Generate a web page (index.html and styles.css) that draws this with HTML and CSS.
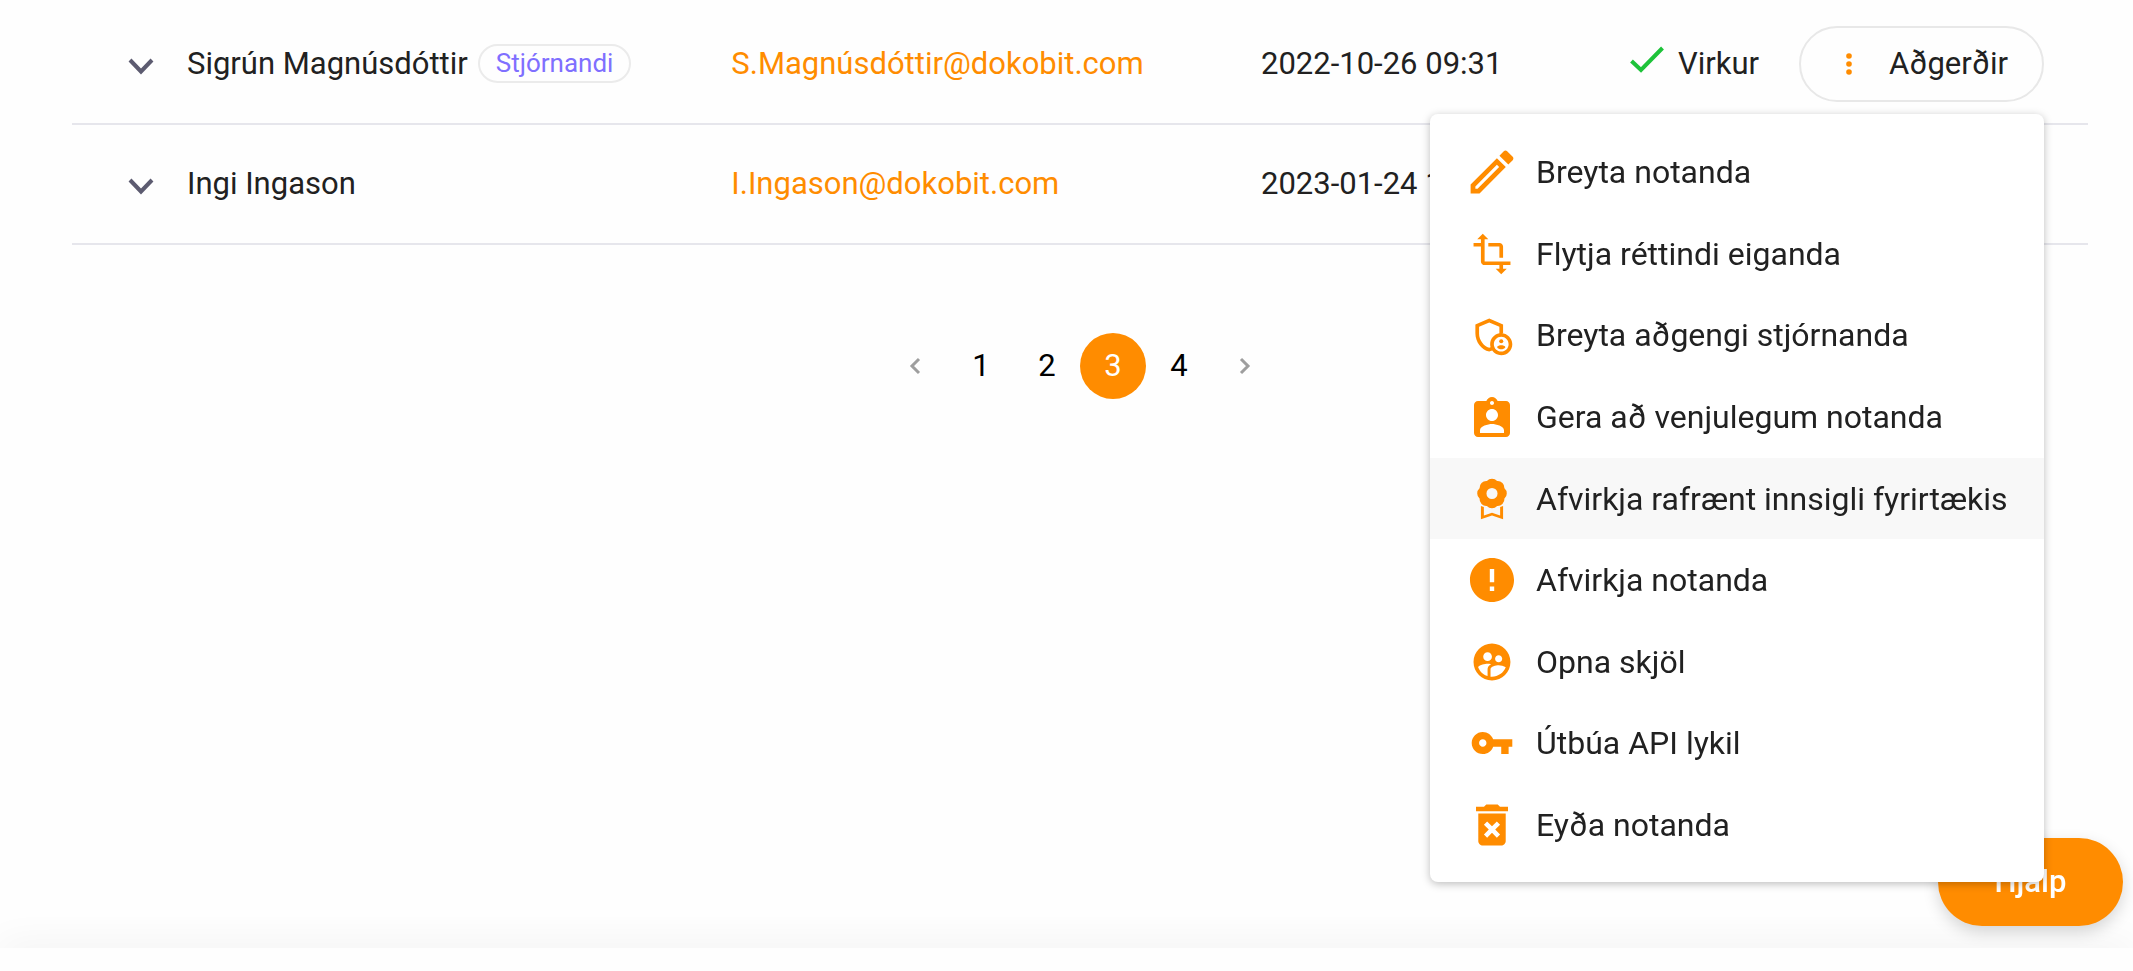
FILE: index.html
```
<!DOCTYPE html>
<html lang="is">
<head>
    <meta charset="UTF-8">
    <meta name="viewport" content="width=device-width, initial-scale=1.0">
    <title>Notendur</title>
    <link rel="stylesheet" href="styles.css">
</head>
<body>
    <main class="content">
        <table class="users">
            <colgroup>
                <col class="col-toggle">
                <col class="col-name">
                <col class="col-email">
                <col class="col-date">
                <col class="col-status">
                <col class="col-actions">
            </colgroup>
            <tbody>
                <tr>
                    <td>
                        <button type="button" class="toggle" aria-label="Sigrún Magnúsdóttir">
                            <svg class="chevron" viewBox="0 0 26 18"><path d="M2 3l11 11.500L24 3"/></svg>
                        </button>
                    </td>
                    <td>
                        <div class="name">Sigrún Magnúsdóttir <span class="badge">Stjórnandi</span></div>
                    </td>
                    <td><a class="email" href="mailto:S.Magnúsdóttir@dokobit.com">S.Magnúsdóttir@dokobit.com</a></td>
                    <td>2022-10-26 09:31</td>
                    <td>
                        <div class="status">
                            <svg class="check" viewBox="0 0 34 40"><path d="M1.500 17l9.500 9L32.500 4"/></svg>
                            Virkur
                        </div>
                    </td>
                    <td>
                        <div class="actions">
                            <button type="button" class="actions-button" aria-expanded="true">
                                <svg class="dots" viewBox="0 0 6 24"><circle cx="3" cy="4" r="2.800"/><circle cx="3" cy="12" r="2.800"/><circle cx="3" cy="20" r="2.800"/></svg>
                                Aðgerðir
                            </button>
                            <div class="menu">
                                <button type="button" class="menu-item">
                                    <svg viewBox="1.900 1.900 20.200 20.200"><path d="M14.060 9L15 9.940L5.920 19H5V18.080L14.060 9M17.660 3C17.410 3 17.150 3.100 16.960 3.290L15.130 5.120L18.880 8.870L20.710 7.040C21.100 6.650 21.100 6 20.710 5.630L18.370 3.290C18.170 3.090 17.920 3 17.660 3M14.060 6.190L3 17.250V21H6.750L17.810 9.940L14.060 6.190Z"/></svg>
                                    Breyta notanda
                                </button>
                                <button type="button" class="menu-item">
                                    <svg viewBox="-1 -1 26 26"><path d="M22 18v-2H8V4h2L7 1 4 4h2v2H2v2h4v8c0 1.100.900 2 2 2h8v2h-2l3 3 3-3h-2v-2h4zM10 8h6v6h2V8c0-1.100-.900-2-2-2h-6v2z"/></svg>
                                    Flytja réttindi eiganda
                                </button>
                                <button type="button" class="menu-item">
                                    <svg viewBox="-1 -1 26 26"><path d="M17 11c.340 0 .670.040 1 .090V6.270L10.500 3 3 6.270v4.910c0 4.540 3.200 8.790 7.500 9.820.550-.130 1.080-.320 1.600-.550C13.180 21.990 14.970 23 17 23c3.310 0 6-2.690 6-6s-2.690-6-6-6zM11 17c0 .560.080 1.110.230 1.620-.240.110-.480.220-.730.300-3.170-1-5.500-4.240-5.500-7.740v-3.600l5.500-2.400 5.500 2.400v3.510C13.160 11.570 11 14.030 11 17zm6 4c-2.210 0-4-1.790-4-4s1.790-4 4-4 4 1.790 4 4-1.790 4-4 4z"/><circle cx="17" cy="15.380" r="1.120"/><path d="M17 17.500c-.730 0-2.190.360-2.240 1.080.500.710 1.320 1.170 2.240 1.170s1.740-.460 2.240-1.170c-.050-.720-1.510-1.080-2.240-1.080z"/></svg>
                                    Breyta aðgengi stjórnanda
                                </button>
                                <button type="button" class="menu-item">
                                    <svg viewBox="0 -1 24 24"><path d="M19 3h-4.180C14.400 1.840 13.300 1 12 1c-1.300 0-2.400.840-2.820 2H5c-1.100 0-2 .900-2 2v14c0 1.100.900 2 2 2h14c1.100 0 2-.900 2-2V5c0-1.100-.900-2-2-2zm-7 0c.550 0 1 .450 1 1s-.450 1-1 1-1-.450-1-1 .450-1 1-1zm0 4c1.660 0 3 1.340 3 3s-1.340 3-3 3-3-1.340-3-3 1.340-3 3-3zm6 12H6v-1.400c0-2 4-3.100 6-3.100s6 1.100 6 3.100V19z"/></svg>
                                    Gera að venjulegum notanda
                                </button>
                                <button type="button" class="menu-item active">
                                    <svg viewBox="-1 -1 26 26"><path fill-rule="evenodd" d="M9.210 2.260A3.700 3.700 0 0 1 14.790 2.260A3.700 3.700 0 0 1 18.740 6.210A3.700 3.700 0 0 1 18.740 11.790A3.700 3.700 0 0 1 14.790 15.740A3.700 3.700 0 0 1 9.210 15.740A3.700 3.700 0 0 1 5.260 11.790A3.700 3.700 0 0 1 5.260 6.210A3.700 3.700 0 0 1 9.210 2.260zM12 6a3 3 0 1 0 0 6 3 3 0 0 0 0-6z"/><path d="M6 15.800l1.600.500v4.600l4.400-1.500 4.400 1.500v-4.600l1.600-.500V23l-6-2-6 2z"/></svg>
                                    Afvirkja rafrænt innsigli fyrirtækis
                                </button>
                                <button type="button" class="menu-item">
                                    <svg viewBox="1.100 1.100 21.800 21.800"><path d="M12 2C6.480 2 2 6.480 2 12s4.480 10 10 10 10-4.480 10-10S17.520 2 12 2zm1 15h-2v-2h2v2zm0-4h-2V7h2v6z"/></svg>
                                    Afvirkja notanda
                                </button>
                                <button type="button" class="menu-item">
                                    <svg viewBox="-1 -1 26 26"><path d="M11.990 2c-5.520 0-10 4.480-10 10s4.480 10 10 10 10-4.480 10-10-4.480-10-10-10zm3.610 6.340c1.070 0 1.930.860 1.930 1.930 0 1.070-.860 1.930-1.930 1.930-1.070 0-1.930-.860-1.930-1.930-.010-1.070.860-1.930 1.930-1.930zm-6-1.580c1.300 0 2.360 1.060 2.360 2.360 0 1.300-1.060 2.360-2.360 2.360s-2.360-1.060-2.360-2.360c0-1.310 1.050-2.360 2.360-2.360zm0 9.130v3.750c-2.400-.750-4.300-2.600-5.140-4.960 1.050-1.120 3.670-1.690 5.140-1.690.530 0 1.200.080 1.900.220-1.640.870-1.900 2.020-1.900 2.680zM11.990 20c-.270 0-.530-.010-.790-.040v-4.070c0-1.420 2.940-2.130 4.400-2.130 1.070 0 2.920.390 3.840 1.150-1.170 2.970-4.060 5.090-7.450 5.090z"/></svg>
                                    Opna skjöl
                                </button>
                                <button type="button" class="menu-item">
                                    <svg viewBox="-1 -1 26 26"><path d="M12.650 10C11.830 7.670 9.610 6 7 6c-3.310 0-6 2.690-6 6s2.690 6 6 6c2.610 0 4.830-1.670 5.650-4H17v4h4v-4h2v-4H12.650zM7 14c-1.100 0-2-.900-2-2s.900-2 2-2 2 .900 2 2-.900 2-2 2z"/></svg>
                                    Útbúa API lykil
                                </button>
                                <button type="button" class="menu-item">
                                    <svg viewBox="1.500 1.500 21 21"><path d="M6 19c0 1.100.900 2 2 2h8c1.100 0 2-.900 2-2V7H6v12zm2.460-7.120l1.410-1.410L12 12.590l2.120-2.120 1.410 1.410L13.410 14l2.120 2.120-1.410 1.410L12 15.410l-2.120 2.120-1.410-1.410L10.590 14l-2.130-2.120zM15.500 4l-1-1h-5l-1 1H5v2h14V4z"/></svg>
                                    Eyða notanda
                                </button>
                            </div>
                        </div>
                    </td>
                </tr>
                <tr>
                    <td>
                        <button type="button" class="toggle" aria-label="Ingi Ingason">
                            <svg class="chevron" viewBox="0 0 26 18"><path d="M2 3l11 11.500L24 3"/></svg>
                        </button>
                    </td>
                    <td>Ingi Ingason</td>
                    <td><a class="email" href="mailto:I.Ingason@dokobit.com">I.Ingason@dokobit.com</a></td>
                    <td>2023-01-24 1</td>
                    <td></td>
                    <td></td>
                </tr>
            </tbody>
        </table>

        <nav class="pagination">
            <button type="button" class="page" aria-label="Fyrri"><svg viewBox="0 0 12 18"><path d="M10 2L3 9l7 7"/></svg></button>
            <button type="button" class="page">1</button>
            <button type="button" class="page">2</button>
            <button type="button" class="page current" aria-current="page">3</button>
            <button type="button" class="page">4</button>
            <button type="button" class="page" aria-label="Næsta"><svg viewBox="0 0 12 18"><path d="M2 2l7 7-7 7"/></svg></button>
        </nav>
    </main>
    <footer class="footer"></footer>
    <button type="button" class="help">Hjálp</button>
</body>
</html>
```
FILE: styles.css
```
* {
    box-sizing: border-box;
}
body {
    margin: 0;
    min-height: 100vh;
    display: flex;
    flex-direction: column;
    overflow: hidden;
    font-family: Roboto, sans-serif;
    font-size: 31px;
    line-height: 40px;
    color: #212121;
    background: #fefefe;
}
button {
    font: inherit;
    color: inherit;
    background: none;
    border: none;
    padding: 0;
    cursor: pointer;
}
.content {
    flex: 1;
    padding: 4px 45px 0 72px;
}

/* Users table */
.users {
    width: 100%;
    table-layout: fixed;
    border-collapse: collapse;
}
.users td {
    height: 120px;
    padding: 0;
    border-bottom: 2px solid #e6e6ec;
    white-space: nowrap;
}
.col-toggle {
    width: 115px;
}
.col-name {
    width: 27%;
}
.col-date {
    width: 369px;
}
.col-status {
    width: 169px;
}
.col-actions {
    width: 289px;
}
.toggle {
    display: flex;
    margin-left: 56px;
    padding-top: 4px;
}
.chevron {
    width: 26px;
    height: 18px;
    fill: none;
    stroke: #5c5b70;
    stroke-width: 4;
}
.name {
    display: flex;
    align-items: center;
    gap: 10px;
}
.badge {
    padding: 0 16px;
    border: 2px solid #ebebeb;
    border-radius: 20px;
    font-size: 26px;
    line-height: 35px;
    color: #7f6fff;
}
.email {
    color: #ff8c00;
    text-decoration: none;
}
.status {
    display: flex;
    align-items: center;
    gap: 14px;
}
.check {
    width: 34px;
    height: 40px;
    fill: none;
    stroke: #1ec33a;
    stroke-width: 4;
}

/* Actions button and its menu */
.actions {
    position: relative;
    width: 245px;
}
.actions-button {
    display: flex;
    align-items: center;
    gap: 37px;
    width: 100%;
    height: 76px;
    padding-left: 45px;
    border: 2px solid #e8e8e8;
    border-radius: 38px;
}
.dots {
    width: 6px;
    height: 24px;
    fill: #ff8c00;
}
.menu {
    position: absolute;
    top: 88px;
    right: 0;
    z-index: 10;
    display: flex;
    flex-direction: column;
    width: 614px;
    min-height: 768px;
    padding: 18px 0 16px;
    border-radius: 8px;
    background: #fff;
    box-shadow: 0 2px 8px rgba(0, 0, 0, 0.26);
}
.menu-item {
    flex: 1;
    display: flex;
    align-items: center;
    gap: 20px;
    padding: 0 0 0 38px;
    font-size: 32px;
    text-align: left;
}
.menu-item svg {
    width: 48px;
    height: 48px;
    flex: none;
    fill: #ff8c00;
}
.menu-item.active,
.menu-item:hover {
    background: #f8f8f8;
}

/* Pagination */
.pagination {
    display: flex;
    justify-content: center;
    margin-top: 88px;
}
.page {
    display: flex;
    align-items: center;
    justify-content: center;
    width: 66px;
    height: 66px;
    border-radius: 50%;
    color: #000;
}
.page svg {
    width: 12px;
    height: 18px;
    fill: none;
    stroke: #9e9e9e;
    stroke-width: 3;
}
.page.current {
    background: #ff8c00;
    color: #fff;
}

.footer {
    height: 23px;
    background: #fefefe;
    box-shadow: 0 0 40px rgba(0, 0, 0, 0.07);
}
.help {
    position: fixed;
    right: 10px;
    bottom: 45px;
    width: 185px;
    height: 88px;
    border-radius: 44px;
    background: #ff8c00;
    color: #fff;
    font-weight: 500;
    box-shadow: 0 6px 16px rgba(0, 0, 0, 0.16);
}
```
